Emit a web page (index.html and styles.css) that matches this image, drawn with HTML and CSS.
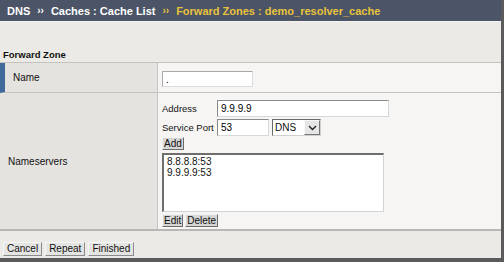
FILE: index.html
```html
<!DOCTYPE html>
<html>
<head>
    <meta charset="utf-8">
    <meta name="viewport" content="width=device-width, initial-scale=1">
    <title>Forward Zones : demo_resolver_cache</title>
    <link rel="stylesheet" href="styles.css">
</head>
<body>
    <div class="frame">
        <div class="crumbs">
            <span>DNS</span>
            <span class="crumb-sep">&rsaquo;&rsaquo;</span>
            <span>Caches : Cache List</span>
            <span class="crumb-sep -current">&rsaquo;&rsaquo;</span>
            <span class="crumb-current">Forward Zones : demo_resolver_cache</span>
        </div>

        <h2 class="section-title">Forward Zone</h2>

        <div class="props">
            <div class="prop-label -first">Name</div>
            <div class="prop-value -name">
                <input class="field field-name" type="text" value=".">
            </div>

            <div class="prop-label">Nameservers</div>
            <div class="prop-value -nameservers">
                <div class="ns-line">
                    <label class="ns-label">Address</label>
                    <input class="field field-address" type="text" value="9.9.9.9">
                </div>
                <div class="ns-line">
                    <label class="ns-label">Service Port</label>
                    <input class="field field-port" type="text" value="53">
                    <div class="select">
                        <span class="select-text">DNS</span>
                        <span class="select-arrow">
                            <svg width="9" height="6" viewBox="0 0 9 6"><path d="M1 1 L4.5 4.5 L8 1" fill="none" stroke="#222" stroke-width="1.4" /></svg>
                        </span>
                    </div>
                </div>
                <button class="mini-button">Add</button>
                <div class="ns-list">
                    <div>8.8.8.8:53</div>
                    <div>9.9.9.9:53</div>
                </div>
                <div class="ns-buttons">
                    <button class="mini-button">Edit</button>
                    <button class="mini-button">Delete</button>
                </div>
            </div>
        </div>

        <div class="actions">
            <button class="action-button">Cancel</button>
            <button class="action-button">Repeat</button>
            <button class="action-button">Finished</button>
        </div>
    </div>
</body>
</html>
```

FILE: styles.css
```css
* { box-sizing: border-box; margin: 0; }

body { margin: 0; }

:root {
    --page-color: #ebeae6;
    --label-color: #e5e3df;
    --value-color: #f6f5f3;
    --line-color: #c4c3c0;
    --header-color: #4b5567;
    --accent-color: #e9c23c;
    --marker-color: #41699a;
}

html {
    background-color: var(--page-color);
    font-family: "Liberation Sans", Arial, sans-serif;
    font-size: 10px;
    color: #111;
}

.frame {
    width: 504px;
    height: 262px;
    border-right: 3px solid #5b5b5b;
    border-bottom: 4px solid #5b5b5b;
    overflow: hidden;
}

.crumbs {
    height: 22px;
    display: flex;
    align-items: center;
    gap: 5px;
    padding-left: 7px;
    background-color: var(--header-color);
    border-bottom: 1px solid #f4f3f0;
    color: #fff;
    font-weight: bold;
    font-size: 11px;
    white-space: nowrap;
}

.crumb-sep {
    font-size: 10px;
    margin: 0 2px;
}

.crumb-sep.-current,
.crumb-current {
    color: var(--accent-color);
}

.section-title {
    margin: 27px 0 0 3px;
    font-size: 9.5px;
    font-weight: bold;
    line-height: 12px;
}

.props {
    display: grid;
    grid-template-columns: 158px 1fr;
    margin-top: 1px;
    border-top: 1px solid var(--line-color);
    border-bottom: 2px solid #b8b7b4;
}

.prop-label {
    display: flex;
    align-items: center;
    padding-left: 8px;
    background-color: var(--label-color);
    border-right: 1px solid var(--line-color);
}

.prop-label.-first {
    border-left: 5px solid var(--marker-color);
    border-bottom: 1px solid var(--line-color);
}

.prop-value {
    background-color: var(--value-color);
    padding-left: 4px;
}

.prop-value.-name {
    height: 30px;
    padding-top: 8px;
    border-bottom: 1px solid var(--line-color);
}

.prop-value.-nameservers {
    display: flex;
    flex-direction: column;
    align-items: flex-start;
    padding-top: 6px;
    padding-bottom: 2px;
}

.field {
    font: inherit;
    height: 17px;
    padding: 0 3px;
    background: #fff;
    border: 1px solid;
    border-color: #8a8a8a #d8d8d8 #d8d8d8 #8a8a8a;
    outline: none;
}

.field-name {
    width: 91px;
    height: 16px;
    border-color: #a8a8a8 #dcdcdc #dcdcdc #a8a8a8;
}

.field-address {
    width: 172px;
}

.field-port {
    width: 52px;
}

.ns-line {
    display: flex;
    align-items: center;
    height: 19px;
}

.ns-label {
    flex: none;
    min-width: 55px;
    padding-right: 1px;
    font-size: 9.5px;
    white-space: nowrap;
}

.select {
    display: flex;
    height: 17px;
    margin-left: 3px;
    background: #fff;
    border: 1px solid;
    border-color: #6a6a6a #cfcfcf #cfcfcf #6a6a6a;
}

.select-text {
    width: 31px;
    padding-left: 2px;
    line-height: 15px;
}

.select-arrow {
    width: 16px;
    display: flex;
    align-items: center;
    justify-content: center;
    background: #e6e6e6;
    border: 1px solid;
    border-color: #f8f8f8 #777 #777 #f8f8f8;
}

.mini-button {
    font: inherit;
    height: 13px;
    padding: 0 1px;
    line-height: 11px;
    background: #d6d6d4;
    color: #111;
    border: 1px solid;
    border-color: #f2f2f2 #6c6c6c #6c6c6c #f2f2f2;
    cursor: pointer;
}

.ns-list {
    width: 222px;
    height: 59px;
    margin-top: 3px;
    padding: 1px 3px;
    line-height: 11px;
    background: #fff;
    border: 1px solid;
    border-width: 2px 1px 1px 2px;
    border-color: #6e6e6e #d4d4d4 #d4d4d4 #6e6e6e;
}

.ns-buttons {
    display: flex;
    gap: 2px;
    margin-top: 2px;
}

.actions {
    display: flex;
    gap: 3px;
    padding: 11px 0 0 3px;
}

.action-button {
    font: inherit;
    height: 14px;
    padding: 0 3px;
    line-height: 12px;
    background: #e4e4e2;
    color: #111;
    border: 1px solid;
    border-color: #f6f6f6 #8a8a8a #8a8a8a #f6f6f6;
    cursor: pointer;
}
```
